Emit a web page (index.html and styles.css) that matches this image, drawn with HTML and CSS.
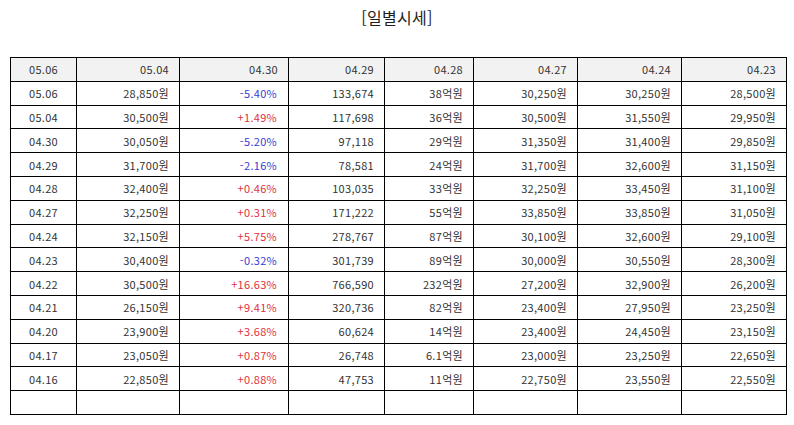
FILE: index.html
```html
<!DOCTYPE html>
<html lang="ko">
<head>
<meta charset="utf-8">
<link rel="stylesheet" href="styles.css">
</head>
<body>
<div class="page">
  <h1 class="title">[일별시세]</h1>
  <table class="grid">
    <colgroup>
      <col class="c1"><col class="c2"><col class="c3"><col class="c4"><col class="c5"><col class="c6"><col class="c7"><col class="c8">
    </colgroup>
    <thead>
      <tr><th class="center">05.06</th><th>05.04</th><th>04.30</th><th>04.29</th><th>04.28</th><th>04.27</th><th>04.24</th><th>04.23</th></tr>
    </thead>
    <tbody>
      <tr><td class="center">05.06</td><td>28,850원</td><td class="down">-5.40%</td><td>133,674</td><td>38억원</td><td>30,250원</td><td>30,250원</td><td>28,500원</td></tr>
      <tr><td class="center">05.04</td><td>30,500원</td><td class="up">+1.49%</td><td>117,698</td><td>36억원</td><td>30,500원</td><td>31,550원</td><td>29,950원</td></tr>
      <tr><td class="center">04.30</td><td>30,050원</td><td class="down">-5.20%</td><td>97,118</td><td>29억원</td><td>31,350원</td><td>31,400원</td><td>29,850원</td></tr>
      <tr><td class="center">04.29</td><td>31,700원</td><td class="down">-2.16%</td><td>78,581</td><td>24억원</td><td>31,700원</td><td>32,600원</td><td>31,150원</td></tr>
      <tr><td class="center">04.28</td><td>32,400원</td><td class="up">+0.46%</td><td>103,035</td><td>33억원</td><td>32,250원</td><td>33,450원</td><td>31,100원</td></tr>
      <tr><td class="center">04.27</td><td>32,250원</td><td class="up">+0.31%</td><td>171,222</td><td>55억원</td><td>33,850원</td><td>33,850원</td><td>31,050원</td></tr>
      <tr><td class="center">04.24</td><td>32,150원</td><td class="up">+5.75%</td><td>278,767</td><td>87억원</td><td>30,100원</td><td>32,600원</td><td>29,100원</td></tr>
      <tr><td class="center">04.23</td><td>30,400원</td><td class="down">-0.32%</td><td>301,739</td><td>89억원</td><td>30,000원</td><td>30,550원</td><td>28,300원</td></tr>
      <tr><td class="center">04.22</td><td>30,500원</td><td class="up">+16.63%</td><td>766,590</td><td>232억원</td><td>27,200원</td><td>32,900원</td><td>26,200원</td></tr>
      <tr><td class="center">04.21</td><td>26,150원</td><td class="up">+9.41%</td><td>320,736</td><td>82억원</td><td>23,400원</td><td>27,950원</td><td>23,250원</td></tr>
      <tr><td class="center">04.20</td><td>23,900원</td><td class="up">+3.68%</td><td>60,624</td><td>14억원</td><td>23,400원</td><td>24,450원</td><td>23,150원</td></tr>
      <tr><td class="center">04.17</td><td>23,050원</td><td class="up">+0.87%</td><td>26,748</td><td>6.1억원</td><td>23,000원</td><td>23,250원</td><td>22,650원</td></tr>
      <tr><td class="center">04.16</td><td>22,850원</td><td class="up">+0.88%</td><td>47,753</td><td>11억원</td><td>22,750원</td><td>23,550원</td><td>22,550원</td></tr>
      <tr><td></td><td></td><td></td><td></td><td></td><td></td><td></td><td></td></tr>
    </tbody>
  </table>
</div>
</body>
</html>
```
FILE: styles.css
```css
html, body {
  margin: 0;
  padding: 0;
  background: #ffffff;
}
body {
  font-family: "Noto Sans CJK KR", "Noto Sans", "DejaVu Sans", sans-serif;
  color: #333333;
}
.page {
  padding: 6px 10px 0 10px;
}
.title {
  margin: 0;
  font-size: 16px;
  line-height: 22px;
  font-weight: normal;
  text-align: center;
  letter-spacing: 0.3px;
  color: #1e1e1e;
  height: 51px;
}
.grid {
  width: 776px;
  border-collapse: collapse;
  table-layout: fixed;
  font-size: 11px;
  letter-spacing: 0.3px;
}
.c1 { width: 66px; }
.c2 { width: 103px; }
.c3 { width: 109px; }
.c4 { width: 96px; }
.c5 { width: 89px; }
.c6 { width: 104px; }
.c7 { width: 104px; }
.c8 { width: 105px; }
.grid tr {
  height: 23.8px;
}
.grid th,
.grid td {
  border: 1px solid #000000;
  padding: 0 10px 0 4px;
  text-align: right;
  font-weight: normal;
  color: #333333;
  line-height: 14px;
  white-space: nowrap;
}
.grid th {
  background: #f2f2f2;
}
.grid .center {
  text-align: center;
  padding: 0;
}
.grid .up {
  color: #e3303c;
}
.grid .down {
  color: #3b3bd2;
}
.grid td.up,
.grid td.down {
  padding-right: 11px;
}
```
